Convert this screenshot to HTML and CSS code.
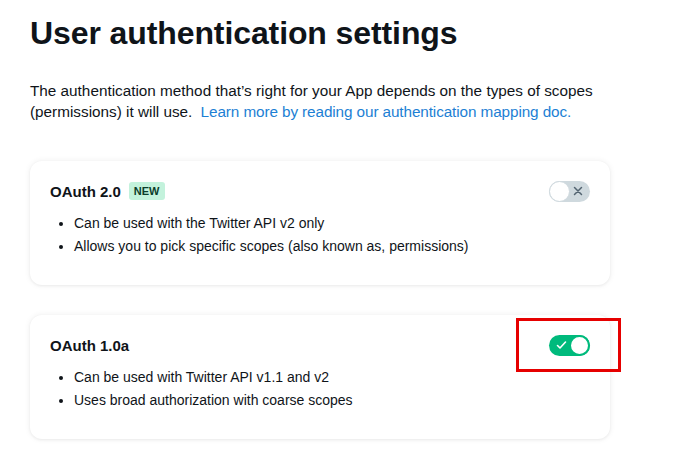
FILE: index.html
```html
<!DOCTYPE html>
<html lang="en">
<head>
<meta charset="UTF-8">
<title>User authentication settings</title>
<meta name="viewport" content="width=device-width, initial-scale=1.0">
<link rel="stylesheet" href="styles.css">
</head>
<body>

<div class="page">
    <h1 class="title">User authentication settings</h1>
    <p class="intro">The authentication method that’s right for your App depends on the types of scopes (permissions) it will use. <a href="#" class="link">Learn more by reading our authentication mapping doc.</a></p>

    <!-- OAuth 2.0 -->
    <div class="card">
        <div class="card-head">
            <div class="card-title">OAuth 2.0 <span class="badge">NEW</span></div>
            <div class="toggle">
                <span class="knob"></span>
                <svg class="toggle-icon" width="10" height="10" viewBox="0 0 10 10"><path d="M1.5 1.5 L8.5 8.5 M8.5 1.5 L1.5 8.5" stroke="#536471" stroke-width="1.5" stroke-linecap="round"/></svg>
            </div>
        </div>
        <ul class="list">
            <li>Can be used with the Twitter API v2 only</li>
            <li>Allows you to pick specific scopes (also known as, permissions)</li>
        </ul>
    </div>

    <!-- OAuth 1.0a -->
    <div class="card second">
        <div class="card-head">
            <div class="card-title">OAuth 1.0a</div>
            <div class="highlight">
                <div class="toggle on">
                    <svg class="toggle-icon" width="11" height="10" viewBox="0 0 11 10"><path d="M1.5 5.5 L4 8 L9.5 2" stroke="#fff" stroke-width="1.6" fill="none" stroke-linecap="round" stroke-linejoin="round"/></svg>
                    <span class="knob"></span>
                </div>
            </div>
        </div>
        <ul class="list">
            <li>Can be used with Twitter API v1.1 and v2</li>
            <li>Uses broad authorization with coarse scopes</li>
        </ul>
    </div>
</div>

</body>
</html>
```

FILE: styles.css
```css
body {
    margin: 0;
    padding: 0;
    background: #fff;
    color: #0f1419;
    font-family: "Liberation Sans", Arial, sans-serif;
}
.page {
    padding: 15px 30px 20px 30px;
    width: 580px;
}
.title {
    margin: 0;
    font-size: 32px;
    font-weight: bold;
    line-height: 36px;
    letter-spacing: -0.1px;
}
.intro {
    margin: 29px 0 0 0;
    font-size: 15.3px;
    line-height: 21px;
    color: #0f1419;
}
.link {
    margin-left: 4px;
    color: #1d7fd4;
    text-decoration: none;
    letter-spacing: -0.1px;
}
.card {
    margin-top: 39px;
    border-radius: 12px;
    background: #fff;
    box-shadow: 0 0 6px rgba(0,0,0,0.07), 0 1px 3px rgba(0,0,0,0.05);
    padding: 19px 20px 27px 20px;
}
.card.second {
    margin-top: 30px;
    padding-bottom: 27px;
}
.card-head {
    display: flex;
    justify-content: space-between;
    align-items: center;
    height: 22px;
}
.card-title {
    font-size: 15px;
    font-weight: bold;
    display: flex;
    align-items: center;
    gap: 8px;
}
.badge {
    background: #c3f2dc;
    color: #0b3d2a;
    font-size: 11px;
    font-weight: bold;
    padding: 2px 5px;
    border-radius: 3px;
    line-height: 14px;
}
.toggle {
    width: 41px;
    height: 21px;
    border-radius: 11px;
    background: #cfd9de;
    display: flex;
    align-items: center;
    justify-content: space-between;
    box-sizing: border-box;
    padding-right: 7px;
}
.toggle .knob {
    width: 21px;
    height: 21px;
    border-radius: 50%;
    background: #fff;
    box-sizing: border-box;
    border: 1px solid #cfd9de;
}
.toggle.on {
    background: #00ba7c;
    padding-right: 0;
    padding-left: 7px;
}
.toggle.on .knob {
    border: 2px solid #00ba7c;
}
.highlight {
    border: 3px solid #e60000;
    width: 105px;
    height: 54px;
    box-sizing: border-box;
    margin-right: -31px;
    display: flex;
    align-items: center;
    padding-left: 30px;
}
.list {
    margin: 10px 0 0 0;
    padding-left: 24px;
    font-size: 14px;
    line-height: 23px;
}
```
